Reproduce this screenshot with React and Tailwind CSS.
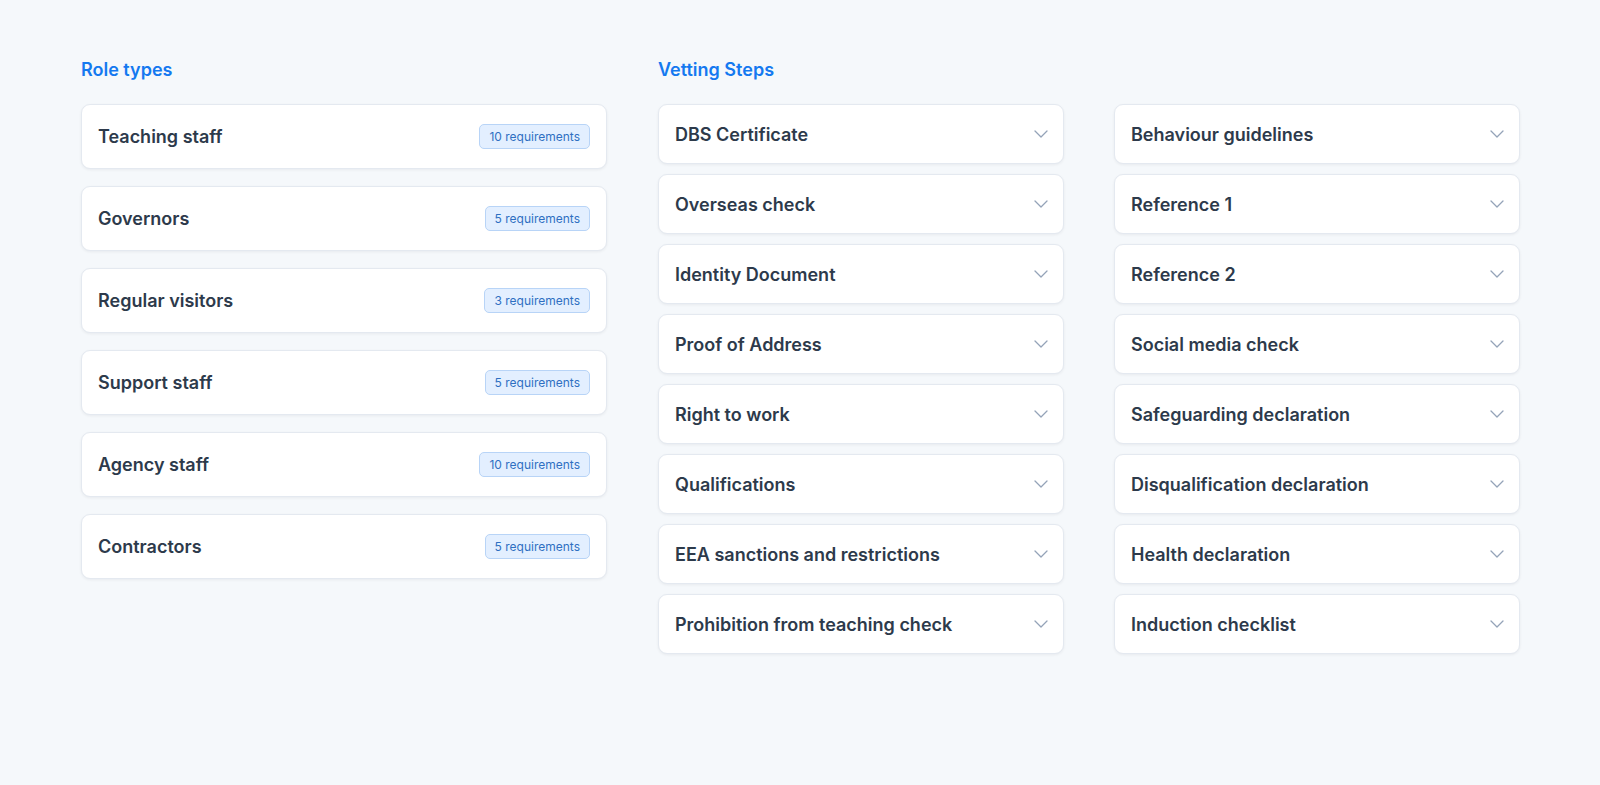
import React from "react";

const roles = [
  { name: "Teaching staff", count: 10 },
  { name: "Governors", count: 5 },
  { name: "Regular visitors", count: 3 },
  { name: "Support staff", count: 5 },
  { name: "Agency staff", count: 10 },
  { name: "Contractors", count: 5 },
];

const stepsLeft = [
  "DBS Certificate",
  "Overseas check",
  "Identity Document",
  "Proof of Address",
  "Right to work",
  "Qualifications",
  "EEA sanctions and restrictions",
  "Prohibition from teaching check",
];

const stepsRight = [
  "Behaviour guidelines",
  "Reference 1",
  "Reference 2",
  "Social media check",
  "Safeguarding declaration",
  "Disqualification declaration",
  "Health declaration",
  "Induction checklist",
];

function Chevron() {
  return (
    <svg width="14" height="8" viewBox="0 0 14 8" fill="none" className="text-[#94a3b8]">
      <path d="M1 1l6 6 6-6" stroke="currentColor" strokeWidth="1.3" strokeLinecap="round" strokeLinejoin="round" />
    </svg>
  );
}

function StepCard({ label }) {
  return (
    <div className="h-[60px] flex items-center justify-between pl-4 pr-[15px] bg-white rounded-[9px] border border-[#e4e9f0] shadow-[0_1px_3px_rgba(15,23,42,0.06)]">
      <span className="text-[18px] font-semibold text-[#2d3a4b]">{label}</span>
      <Chevron />
    </div>
  );
}

export default function App() {
  return (
    <div
      className="min-h-screen bg-[#f5f8fb] pt-[59px] pl-[81px]"
      style={{ fontFamily: "Inter, 'Noto Sans', sans-serif" }}
    >
      <div className="flex gap-[51px]">
        <div className="w-[526px]">
          <h2 className="text-[18px] font-semibold text-[#1479f0] leading-[22px] mb-[23px]">Role types</h2>
          <div className="flex flex-col gap-[17px]">
            {roles.map((r) => (
              <div
                key={r.name}
                className="h-[65px] flex items-center justify-between pl-4 pr-4 bg-white rounded-[9px] border border-[#e4e9f0] shadow-[0_1px_3px_rgba(15,23,42,0.06)]"
              >
                <span className="text-[18px] font-semibold text-[#2d3a4b]">{r.name}</span>
                <span className="h-[25px] flex items-center px-[9px] rounded-[5px] border border-[#b8d4f7] bg-[#e3efff] text-[12px] text-[#2f6fc2]">
                  {r.count} requirements
                </span>
              </div>
            ))}
          </div>
        </div>
        <div>
          <h2 className="text-[18px] font-semibold text-[#1479f0] leading-[22px] mb-[23px]">Vetting Steps</h2>
          <div className="flex gap-[50px]">
            <div className="w-[406px] flex flex-col gap-[10px]">
              {stepsLeft.map((s) => (
                <StepCard key={s} label={s} />
              ))}
            </div>
            <div className="w-[406px] flex flex-col gap-[10px]">
              {stepsRight.map((s) => (
                <StepCard key={s} label={s} />
              ))}
            </div>
          </div>
        </div>
      </div>
    </div>
  );
}
